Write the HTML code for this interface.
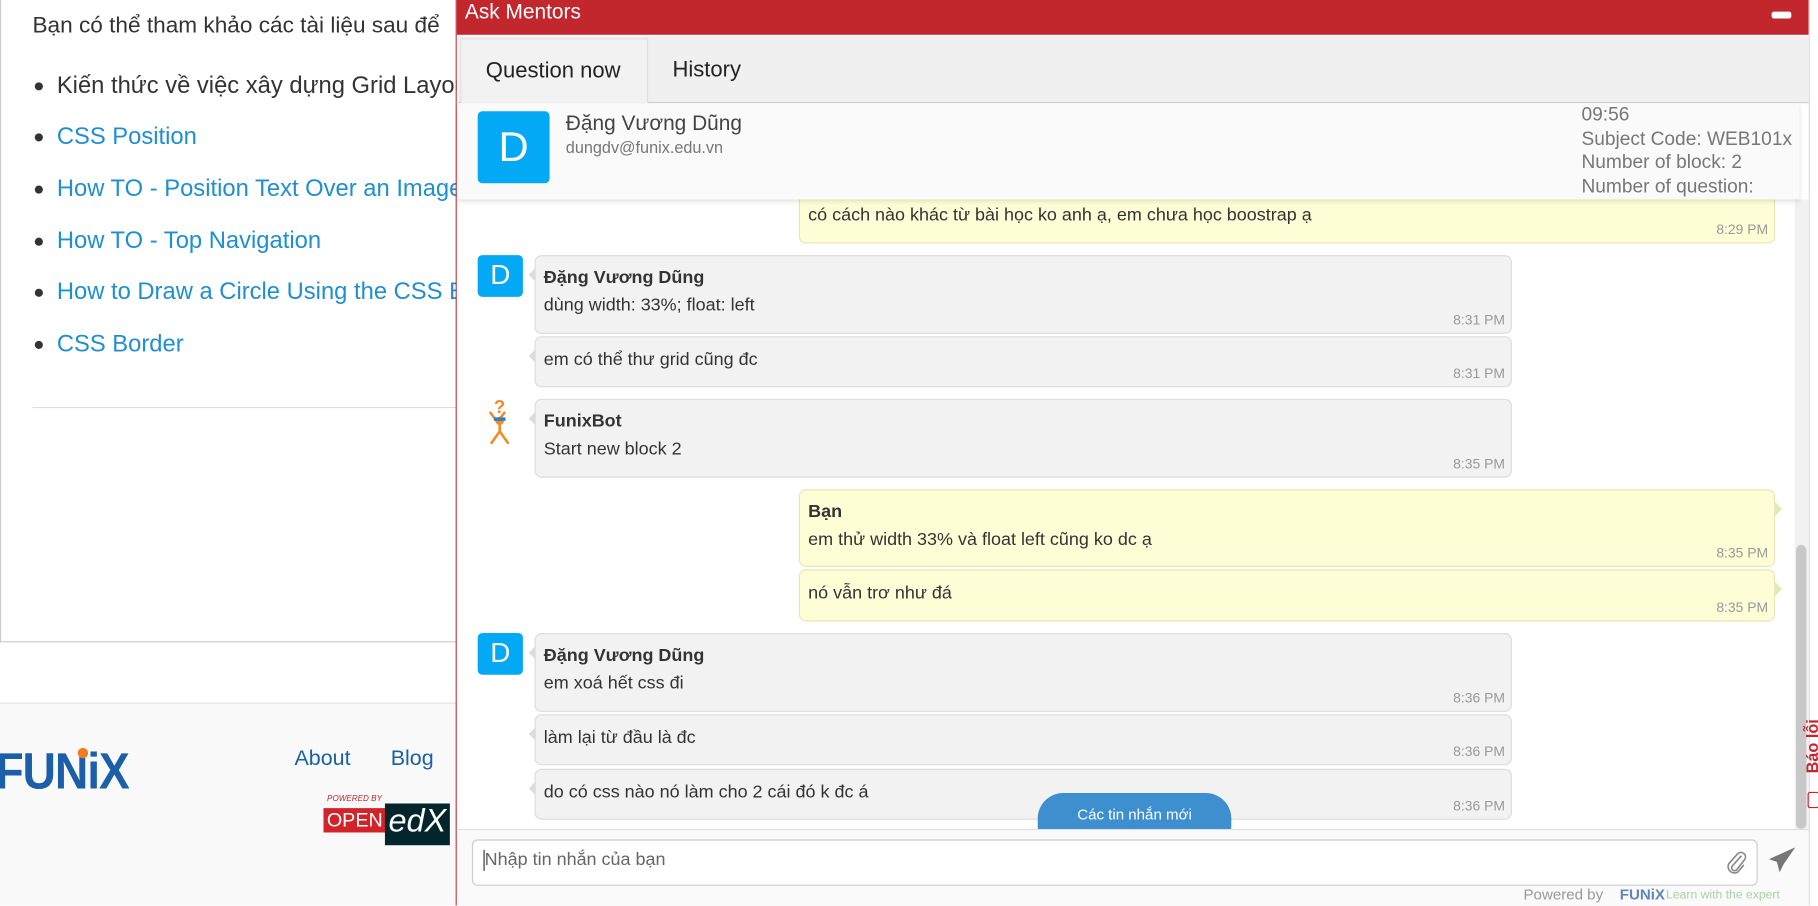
<!DOCTYPE html>
<html><head><meta charset="utf-8">
<style>
html,body{margin:0;padding:0;width:1818px;height:905px;overflow:hidden;background:#fff;font-family:"Liberation Sans",Arial,sans-serif;}
#w{position:absolute;left:0;top:0;width:1568px;height:781px;transform:scale(1.15944);transform-origin:0 0;overflow:hidden;}
.a{position:absolute;white-space:nowrap;}
.lnk{color:#1e90d2;font-size:20.5px;}
.dot{position:absolute;width:7px;height:7px;border-radius:50%;background:#333;}
.msg{position:absolute;border:1px solid #dcdcdc;border-radius:6px;background:#f2f2f2;color:#333;font-size:15.5px;}
.msg.y{background:#fefed6;border-color:#e6e6b8;}
.msg b{position:absolute;left:7px;top:10px;font-size:15.5px;}
.msg .t{position:absolute;left:7px;}
.msg .tm{position:absolute;right:5px;bottom:4px;font-size:12px;color:#999;}
.av{position:absolute;background:#03a9f4;color:#fff;border-radius:4px;text-align:center;font-size:24px;}
.arrL{position:absolute;left:-6px;top:10px;width:0;height:0;border-top:6px solid transparent;border-bottom:6px solid transparent;border-right:6px solid #dcdcdc;}
.arrR{position:absolute;right:-7px;top:10px;width:0;height:0;border-top:6px solid transparent;border-bottom:6px solid transparent;border-left:6px solid #e6e6b8;}
</style></head><body><div id="w">
<!-- left page -->
<div class="a" style="left:0;top:0;width:395px;height:553px;border-left:1px solid #ccc;border-bottom:1px solid #ccc;"></div>
<div class="a" style="left:28px;top:11px;font-size:19.5px;color:#333;">Bạn có thể tham khảo các tài liệu sau để</div>
<div class="dot" style="left:30px;top:71px"></div><div class="a" style="left:49px;top:62px;font-size:20.5px;color:#333;">Kiến thức về việc xây dựng Grid Layout</div>
<div class="dot" style="left:30px;top:115px"></div><div class="a lnk" style="left:49px;top:106px;">CSS Position</div>
<div class="dot" style="left:30px;top:160px"></div><div class="a lnk" style="left:49px;top:151px;">How TO - Position Text Over an Image</div>
<div class="dot" style="left:30px;top:205px"></div><div class="a lnk" style="left:49px;top:196px;">How TO - Top Navigation</div>
<div class="dot" style="left:30px;top:249px"></div><div class="a lnk" style="left:49px;top:240px;">How to Draw a Circle Using the CSS Border</div>
<div class="dot" style="left:30px;top:294px"></div><div class="a lnk" style="left:49px;top:285px;">CSS Border</div>
<div class="a" style="left:28px;top:351px;width:370px;height:1px;background:#ddd;"></div>
<div class="a" style="left:0;top:606px;width:395px;height:175px;background:#f9f9f9;border-top:1px solid #e5e5e5;"></div>
<div class="a" style="left:-4px;top:644px;font-size:40px;font-weight:bold;color:#1a5fa8;letter-spacing:-1px;transform:scaleY(1.1);">FUNiX</div>
<div class="a" style="left:67px;top:645px;width:9px;height:9px;border-radius:50%;background:#f47c20;"></div>
<div class="a" style="left:254px;top:643px;font-size:18.5px;color:#1a5fa8;">About</div>
<div class="a" style="left:337px;top:643px;font-size:18.5px;color:#1a5fa8;">Blog</div>
<div class="a" style="left:282px;top:686px;font-size:7px;color:#c1272d;font-style:italic;">POWERED BY</div>
<div class="a" style="left:279px;top:697px;width:54px;height:21px;background:#d2232a;color:#fff;font-size:17px;line-height:21px;text-align:center;">OPEN</div>
<div class="a" style="left:332px;top:693px;width:56px;height:36px;background:#02262b;color:#fff;font-size:28px;line-height:30px;font-style:italic;text-align:center;">edX</div>
<!-- chat panel -->
<div class="a" style="left:393px;top:0;width:1px;height:781px;background:#c1272d;"></div>
<div class="a" style="left:394px;top:0;width:1174px;height:781px;background:#fff;"></div>
<div class="a" style="left:394px;top:0;width:1166px;height:30px;background:#c1272d;"></div>
<div class="a" style="left:401px;top:0;font-size:18px;color:#fff;">Ask Mentors</div>
<div class="a" style="left:1528px;top:10px;width:17px;height:6px;background:#fff;border-radius:2px;"></div>
<div class="a" style="left:395px;top:31px;width:1165px;height:57px;background:#f0f0f0;border-bottom:1px solid #d0d0d0;"></div>
<div class="a" style="left:397px;top:33px;width:160px;height:55px;background:#f2f2f2;border:1px solid #e0e0e0;border-bottom:none;"></div>
<div class="a" style="left:419px;top:51px;font-size:19px;color:#222;">Question now</div>
<div class="a" style="left:580px;top:50px;font-size:19px;color:#222;">History</div>
<!-- messages -->
<div class="a" style="left:1548px;top:172px;width:12px;height:543px;background:#f1f1f1;"></div>
<div class="a" style="left:1549px;top:470px;width:9px;height:245px;background:#c8c8c8;border-radius:5px;"></div>
<div class="msg y" style="left:689px;top:150px;width:840px;height:58px;"><div class="t" style="top:26px;">có cách nào khác từ bài học ko anh ạ, em chưa học boostrap ạ</div><div class="tm">8:29 PM</div></div>

<div class="av" style="left:412px;top:220px;width:39px;height:36px;line-height:36px;">D</div>
<div class="msg" style="left:461px;top:220px;width:841px;height:66px;"><div class="arrL"></div><b>Đặng Vương Dũng</b><div class="t" style="top:34px;">dùng width: 33%; float: left</div><div class="tm">8:31 PM</div></div>
<div class="msg" style="left:461px;top:290px;width:841px;height:42px;"><div class="arrL"></div><div class="t" style="top:11px;">em có thể thư grid cũng đc</div><div class="tm">8:31 PM</div></div>

<svg class="a" style="left:415px;top:342px" width="32" height="42" viewBox="0 0 32 42"><text x="11" y="14" font-size="16" font-weight="bold" fill="#f08a24" font-family="Liberation Sans">?</text><g stroke="#f08a24" stroke-width="2.2" fill="none" stroke-linecap="round"><path d="M8 14 L14 22 L20 14"/><path d="M16 20 L16 30 M16 30 L9 40 M16 30 L23 40"/><circle cx="16" cy="21" r="2.5" fill="#f08a24"/></g><rect x="11" y="18" width="10" height="3" fill="#2a7fc8"/></svg>
<div class="msg" style="left:461px;top:344px;width:841px;height:66px;"><div class="arrL"></div><b>FunixBot</b><div class="t" style="top:34px;">Start new block 2</div><div class="tm">8:35 PM</div></div>

<div class="msg y" style="left:689px;top:422px;width:840px;height:65px;"><div class="arrR"></div><b>Bạn</b><div class="t" style="top:34px;">em thử width 33% và float left cũng ko dc ạ</div><div class="tm">8:35 PM</div></div>
<div class="msg y" style="left:689px;top:491px;width:840px;height:43px;"><div class="arrR"></div><div class="t" style="top:11px;">nó vẫn trơ như đá</div><div class="tm">8:35 PM</div></div>

<div class="av" style="left:412px;top:546px;width:39px;height:36px;line-height:36px;">D</div>
<div class="msg" style="left:461px;top:546px;width:841px;height:66px;"><div class="arrL"></div><b>Đặng Vương Dũng</b><div class="t" style="top:34px;">em xoá hết css đi</div><div class="tm">8:36 PM</div></div>
<div class="msg" style="left:461px;top:616px;width:841px;height:42px;"><div class="arrL"></div><div class="t" style="top:11px;">làm lại từ đầu là đc</div><div class="tm">8:36 PM</div></div>
<div class="msg" style="left:461px;top:663px;width:841px;height:42px;"><div class="arrL"></div><div class="t" style="top:11px;">do có css nào nó làm cho 2 cái đó k đc á</div><div class="tm">8:36 PM</div></div>
<div class="a" style="left:895px;top:684px;width:167px;height:50px;border-radius:22px;background:#3d8fd0;color:#fff;font-size:13px;text-align:center;line-height:38px;">Các tin nhắn mới</div>

<!-- info header (overlay) -->
<div class="a" style="left:395px;top:89px;width:1157px;height:83px;background:#fafafa;box-shadow:0 2px 4px rgba(0,0,0,0.12);"></div>
<div class="av" style="left:412px;top:96px;width:62px;height:62px;line-height:62px;font-size:36px;">D</div>
<div class="a" style="left:488px;top:96px;font-size:18px;color:#444;">Đặng Vương Dũng</div>
<div class="a" style="left:488px;top:119px;font-size:14px;color:#777;">dungdv@funix.edu.vn</div>
<div class="a" style="left:1364px;top:89px;font-size:16.5px;color:#777;line-height:20.5px;">09:56<br>Subject Code: WEB101x<br>Number of block: 2<br>Number of question:</div>

<!-- input area -->
<div class="a" style="left:395px;top:715px;width:1165px;height:66px;background:#fafafa;border-top:1px solid #e0e0e0;"></div>
<div class="a" style="left:407px;top:724px;width:1107px;height:38px;background:#fff;border:1px solid #ccc;border-radius:5px;"></div>
<div class="a" style="left:417px;top:733px;width:1px;height:18px;background:#333;"></div>
<div class="a" style="left:418px;top:733px;font-size:15.5px;color:#666;">Nhập tin nhắn của bạn</div>
<svg class="a" style="left:1488px;top:732px" width="20" height="22" viewBox="0 0 20 22"><path d="M14 6 L6 15 a2.5 2.5 0 0 0 4 3 L17 9 a4 4 0 0 0 -6 -5 L3 13 a5.5 5.5 0 0 0 8 7 L16 14" fill="none" stroke="#888" stroke-width="1.4"/></svg>
<svg class="a" style="left:1526px;top:731px" width="22" height="22" viewBox="0 0 22 22"><path d="M21 1 L1 10 L7 12 L9 20 L12 14 L21 1 Z M21 1 L7 12" fill="#777" stroke="#777" stroke-width="1"/></svg>
<div class="a" style="left:1314px;top:764px;font-size:13px;color:#999;">Powered by</div>
<div class="a" style="left:1397px;top:764px;font-size:13px;font-weight:bold;color:#5e86bb;">FUNiX</div>
<div class="a" style="left:1437px;top:766px;font-size:10.5px;color:#a5d6a0;">Learn with the expert</div>
<!-- right edge -->
<div class="a" style="left:1560px;top:0;width:8px;height:781px;background:#fff;border-left:1px solid #ddd;"></div>
<div class="a" style="left:1555px;top:667px;font-size:14px;font-weight:bold;color:#c1272d;transform:rotate(-90deg);transform-origin:left top;">Báo lỗi</div>
<div class="a" style="left:1559px;top:683px;width:8px;height:12px;border:1px solid #c1272d;border-radius:2px;"></div>
</div></body></html>
